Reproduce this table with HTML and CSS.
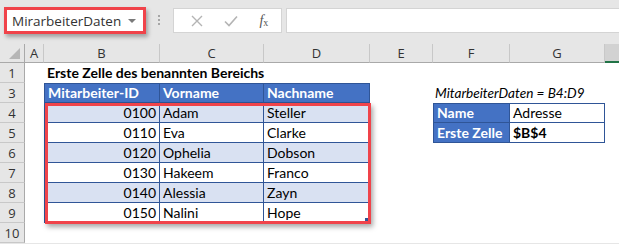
FILE: index.html
```html
<!DOCTYPE html>
<html lang="de">
<head>
    <meta charset="UTF-8">
    <meta name="viewport" content="width=device-width, initial-scale=1.0">
    <title>MitarbeiterDaten</title>
    <link rel="stylesheet" href="styles.css">
</head>
<body>
<div class="app">
    <!-- Name box + formula bar -->
    <div class="formula-bar">
        <div class="namebox">
            <span class="namebox-text">MirarbeiterDaten</span>
            <span class="namebox-arrow"></span>
        </div>
        <div class="grip"><span></span><span></span><span></span></div>
        <div class="fx-buttons">
            <svg class="fx-icon" width="12" height="12" viewBox="0 0 12 12">
                <path d="M1 1 L11 11 M11 1 L1 11" stroke="#b4b4b4" stroke-width="1.4" fill="none"/>
            </svg>
            <svg class="fx-icon" width="14" height="12" viewBox="0 0 14 12">
                <path d="M1 6.5 L5 10.5 L13 1.5" stroke="#b4b4b4" stroke-width="1.6" fill="none"/>
            </svg>
            <span class="fx-label"><i>f</i><sub>x</sub></span>
        </div>
        <div class="formula-input"></div>
    </div>

    <!-- Worksheet -->
    <div class="sheet">
        <div class="r">
            <div class="corner"><span class="corner-tri"></span></div>
            <div class="ch">A</div><div class="ch">B</div><div class="ch">C</div><div class="ch">D</div>
            <div class="ch">E</div><div class="ch">F</div><div class="ch">G</div><div class="ch ch-next"></div>
        </div>
        <div class="r">
            <div class="rh">1</div><div></div>
            <div class="cell title">Erste Zelle des benannten Bereichs</div>
            <div></div><div></div><div></div><div></div><div></div><div></div>
        </div>
        <div class="r">
            <div class="rh">3</div><div></div>
            <div class="cell t th t-first t-top">Mitarbeiter-ID</div>
            <div class="cell t th t-top">Vorname</div>
            <div class="cell t th t-top">Nachname</div>
            <div></div>
            <div class="cell note">MitarbeiterDaten = B4:D9</div>
            <div></div><div></div>
        </div>
        <div class="r">
            <div class="rh">4</div><div></div>
            <div class="cell t t-first band num">0100</div>
            <div class="cell t band">Adam</div>
            <div class="cell t band">Steller</div>
            <div></div>
            <div class="cell t th t-first t-top">Name</div>
            <div class="cell t t-top">Adresse</div>
            <div></div>
        </div>
        <div class="r">
            <div class="rh">5</div><div></div>
            <div class="cell t t-first num">0110</div>
            <div class="cell t">Eva</div>
            <div class="cell t">Clarke</div>
            <div></div>
            <div class="cell t th t-first">Erste Zelle</div>
            <div class="cell t strong">$B$4</div>
            <div></div>
        </div>
        <div class="r">
            <div class="rh">6</div><div></div>
            <div class="cell t t-first band num">0120</div>
            <div class="cell t band">Ophelia</div>
            <div class="cell t band">Dobson</div>
            <div></div><div></div><div></div><div></div>
        </div>
        <div class="r">
            <div class="rh">7</div><div></div>
            <div class="cell t t-first num">0130</div>
            <div class="cell t">Hakeem</div>
            <div class="cell t">Franco</div>
            <div></div><div></div><div></div><div></div>
        </div>
        <div class="r">
            <div class="rh">8</div><div></div>
            <div class="cell t t-first band num">0140</div>
            <div class="cell t band">Alessia</div>
            <div class="cell t band">Zayn</div>
            <div></div><div></div><div></div><div></div>
        </div>
        <div class="r">
            <div class="rh">9</div><div></div>
            <div class="cell t t-first num">0150</div>
            <div class="cell t">Nalini</div>
            <div class="cell t">Hope</div>
            <div></div><div></div><div></div><div></div>
        </div>
        <div class="r">
            <div class="rh">10</div>
            <div></div><div></div><div></div><div></div><div></div><div></div><div></div><div></div>
        </div>

        <!-- highlighted range B4:D9, drawn over the cells -->
        <div class="range-mark"><span class="fill-handle"></span></div>
    </div>
</div>
</body>
</html>
```

FILE: styles.css
```css
:root {
    --xl-grey: #e6e6e6;
    --xl-line: #c8c8c8;
    --xl-head-line: #a9a9a9;
    --tbl-blue: #4472c4;
    --tbl-band: #d9e1f2;
    --tbl-border: #2f5597;
    --mark-red: #f0434a;
}

body {
    margin: 0;
    background: #fff;
    font-family: 'Lato', 'Liberation Sans', sans-serif;
}

.app {
    width: 619px;
    height: 244px;
    overflow: hidden;
    background: var(--xl-grey);
}

/* ---- formula bar ---- */
.formula-bar {
    display: flex;
    align-items: flex-start;
    height: 44px;
    padding: 7px 0 0 4px;
    box-sizing: border-box;
}

.namebox {
    display: flex;
    align-items: center;
    justify-content: space-between;
    width: 142px;
    height: 27px;
    box-sizing: border-box;
    border: 3px solid var(--mark-red);
    background: #fff;
    padding: 0 7px 0 5px;
    box-shadow: 2px 3px 4px rgba(0, 0, 0, 0.3);
}

.namebox-text {
    font-family: 'Open Sans', sans-serif;
    font-size: 13.5px;
    color: #333;
}

.namebox-arrow {
    width: 0;
    height: 0;
    border-left: 4px solid transparent;
    border-right: 4px solid transparent;
    border-top: 4px solid #7a7a7a;
}

.grip {
    display: flex;
    flex-direction: column;
    gap: 2px;
    margin: 8px 13px 0 12px;
}

.grip span {
    width: 2px;
    height: 2px;
    background: #a6a6a6;
}

.fx-buttons {
    display: flex;
    align-items: center;
    justify-content: space-around;
    width: 109px;
    height: 25px;
    margin-top: 1px;
    box-sizing: border-box;
    border: 1px solid #d4d4d4;
    background: #fff;
    padding: 0 2px 0 6px;
}

.fx-label {
    font-family: 'Liberation Serif', serif;
    font-size: 14px;
    color: #555;
}

.fx-label sub {
    font-size: 10px;
    vertical-align: -1px;
}

.formula-input {
    flex: 1;
    height: 25px;
    margin: 1px 0 0 4px;
    box-sizing: border-box;
    border: 1px solid #d4d4d4;
    border-right: none;
    background: #fff;
}

/* ---- worksheet grid ---- */
.sheet {
    position: relative;
    display: grid;
    grid-template-columns: 25px 19px 116px 104px 106px 63px 77px 95px 1fr;
    grid-template-rows: 19px repeat(9, 20px);
    background: #fff;
    font-size: 14px;
    color: #000;
}

.r {
    display: contents;
}

.corner,
.ch,
.rh {
    background: var(--xl-grey);
    font-family: 'Open Sans', sans-serif;
    font-size: 13px;
    color: #333;
    box-sizing: border-box;
}

.corner {
    position: relative;
    border-right: 1px solid var(--xl-head-line);
    border-bottom: 1px solid var(--xl-head-line);
}

.corner-tri {
    position: absolute;
    right: 4px;
    bottom: 3px;
    width: 0;
    height: 0;
    border-left: 11px solid transparent;
    border-bottom: 11px solid #b6b6b6;
}

.ch {
    display: flex;
    align-items: center;
    justify-content: center;
    border-right: 1px solid var(--xl-line);
    border-bottom: 1px solid var(--xl-head-line);
    line-height: 1;
    padding-top: 1px;
}

.ch-next {
    background: #d2d2d2;
    border-bottom: 2px solid #217346;
    border-right: none;
}

.rh {
    display: flex;
    align-items: center;
    justify-content: center;
    border-right: 1px solid var(--xl-head-line);
    border-bottom: 1px solid var(--xl-line);
}

.cell {
    box-sizing: border-box;
    line-height: 20px;
    padding: 0 3px;
    white-space: nowrap;
}

.title {
    font-weight: bold;
    overflow: visible;
    padding-left: 3px;
}

.note {
    font-style: italic;
    font-size: 13.6px;
    padding-left: 2px;
}

/* table cells */
.t {
    border-right: 1px solid var(--tbl-border);
    border-bottom: 1px solid var(--tbl-border);
    line-height: 19px;
}

.t-first {
    border-left: 1px solid var(--tbl-border);
}

.t-top {
    border-top: 1px solid var(--tbl-border);
    line-height: 18px;
}

.th {
    background: var(--tbl-blue);
    color: #fff;
    font-weight: bold;
}

.band {
    background: var(--tbl-band);
}

.num {
    text-align: right;
}

.strong {
    font-weight: bold;
}

/* red frame around B4:D9 */
.range-mark {
    position: absolute;
    grid-column: 3 / 6;
    grid-row: 4 / 10;
    top: 0;
    left: 1px;
    right: -1px;
    bottom: -1px;
    border: 3px solid var(--mark-red);
    box-shadow: 2px 3px 5px rgba(0, 0, 0, 0.35);
    pointer-events: none;
}

.fill-handle {
    position: absolute;
    right: 0;
    bottom: 0;
    width: 3px;
    height: 3px;
    background: var(--tbl-border);
}
```
